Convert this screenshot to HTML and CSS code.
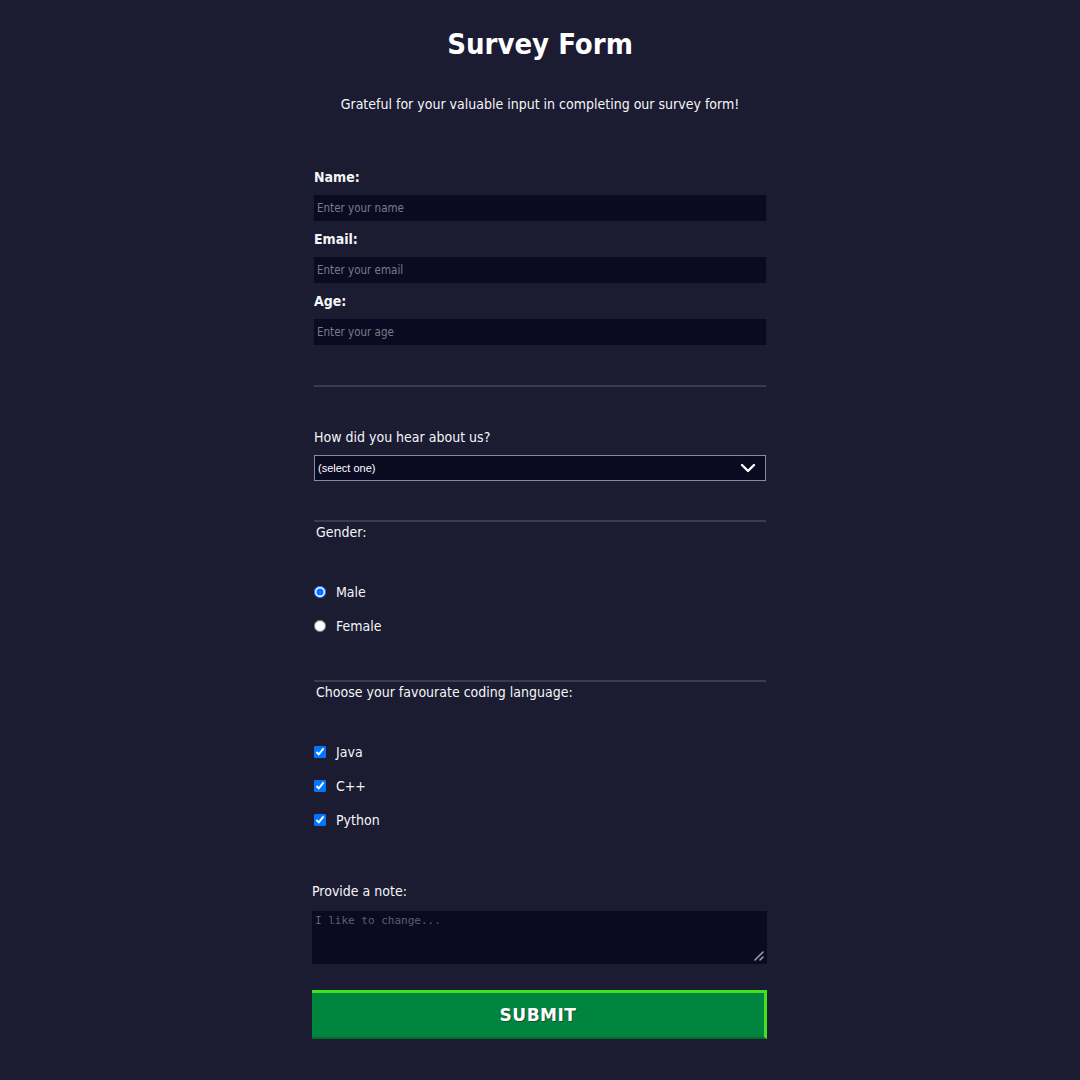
FILE: index.html
```html
<!DOCTYPE html>
<html lang="en">
<head>
<meta charset="utf-8">
<title>Survey Form</title>
<link rel="stylesheet" href="styles.css">
</head>
<body>
<h1 class="title">Survey Form</h1>
<p class="subtitle">Grateful for your valuable input in completing our survey form!</p>
<form class="survey">
  <label class="field-label" for="name">Name:</label>
  <input class="text-input" id="name" type="text" placeholder="Enter your name">
  <label class="field-label" for="email">Email:</label>
  <input class="text-input" id="email" type="email" placeholder="Enter your email">
  <label class="field-label" for="age">Age:</label>
  <input class="text-input" id="age" type="number" placeholder="Enter your age">

  <div class="rule rule-first"></div>

  <label class="plain-label hear" for="hear">How did you hear about us?</label>
  <div class="select-wrap">
    <select id="hear" class="select">
      <option>(select one)</option>
    </select>
    <svg class="chevron" width="16" height="10" viewBox="0 0 16 10"><path d="M2 2 L8 8 L14 2" fill="none" stroke="#ffffff" stroke-width="2.4" stroke-linecap="round" stroke-linejoin="round"/></svg>
  </div>

  <div class="rule rule-second"></div>
  <p class="group-label">Gender:</p>
  <div class="options options-radio">
    <label class="option"><input type="radio" name="gender" checked><span>Male</span></label>
    <label class="option"><input type="radio" name="gender"><span>Female</span></label>
  </div>

  <div class="rule rule-third"></div>
  <p class="group-label">Choose your favourate coding language:</p>
  <div class="options options-check">
    <label class="option"><input type="checkbox" checked><span>Java</span></label>
    <label class="option"><input type="checkbox" checked><span>C++</span></label>
    <label class="option"><input type="checkbox" checked><span>Python</span></label>
  </div>

  <label class="plain-label note-label" for="note">Provide a note:</label>
  <div class="note-wrap">
    <textarea id="note" class="note" placeholder="I like to change..."></textarea>
    <svg class="grip" width="12" height="12" viewBox="0 0 12 12"><path d="M2 10 L10 2 M7 10 L10 7" fill="none" stroke="#a0a0a8" stroke-width="1.6" stroke-linecap="round"/></svg>
  </div>

  <button type="submit" class="submit">SUBMIT</button>
</form>
</body>
</html>
```
FILE: styles.css
```css
html, body {
  margin: 0;
  padding: 0;
}
body {
  background: #1b1b32;
  color: #f5f6f7;
  font-family: "DejaVu Sans Condensed", "DejaVu Sans", sans-serif;
  width: 1080px;
  height: 1080px;
  overflow: hidden;
}
.title {
  margin: 0;
  padding-top: 26px;
  text-align: center;
  font-size: 29px;
  line-height: 36px;
  font-weight: bold;
  color: #ffffff;
}
.subtitle {
  margin: 0;
  margin-top: 33px;
  text-align: center;
  font-size: 14px;
  line-height: 18px;
}
.survey {
  width: 455px;
  margin: 0 0 0 312px;
  padding-top: 54px;
  display: flex;
  flex-direction: column;
}
.field-label {
  display: block;
  margin-left: 2px;
  font-size: 14px;
  line-height: 20px;
  font-weight: bold;
  margin-bottom: 8px;
}
.text-input {
  box-sizing: border-box;
  width: 452px;
  height: 26px;
  margin: 0 0 8px 2px;
  border: none;
  padding: 0 3px;
  background: #0a0a23;
  color: #ffffff;
  font-family: "DejaVu Sans Condensed", sans-serif;
  font-size: 11.5px;
  outline: none;
}
.text-input::placeholder {
  color: #7a7a88;
}
.rule {
  height: 2px;
  width: 452px;
  margin-left: 2px;
  background: #3b3b4f;
}
.rule-first {
  margin-top: 32px;
}
.plain-label {
  display: block;
  font-size: 14px;
  line-height: 20px;
}
.hear {
  margin-top: 40px;
  margin-left: 2px;
}
.select-wrap {
  position: relative;
  margin-top: 8px;
  margin-left: 2px;
  width: 452px;
  height: 26px;
}
.select {
  appearance: none;
  -webkit-appearance: none;
  box-sizing: border-box;
  width: 452px;
  height: 26px;
  background: #0a0a23;
  color: #ffffff;
  border: 1px solid #8a8a98;
  border-radius: 0;
  padding: 0 3px;
  font-family: "Liberation Sans", Arial, sans-serif;
  font-size: 11px;
}
.chevron {
  position: absolute;
  right: 10px;
  top: 8px;
  pointer-events: none;
}
.rule-second {
  margin-top: 39px;
}
.group-label {
  margin: 0 0 0 4px;
  font-size: 14px;
  line-height: 20px;
}
.options {
  display: flex;
  flex-direction: column;
  gap: 14px;
  margin-left: 2px;
}
.options-radio {
  margin-top: 40px;
}
.option {
  display: flex;
  align-items: center;
  height: 20px;
  font-size: 14px;
  line-height: 20px;
}
.option input {
  margin: 0 10px 0 0;
  width: 12px;
  height: 12px;
}
.rule-third {
  margin-top: 44px;
}
.options-check {
  margin-top: 40px;
}
.note-label {
  margin-top: 51px;
}
.note-wrap {
  position: relative;
  margin-top: 10px;
  width: 455px;
  height: 53px;
}
.note {
  display: block;
  box-sizing: border-box;
  width: 455px;
  height: 53px;
  margin: 0;
  background: #0a0a23;
  color: #ffffff;
  border: none;
  padding: 3px 3px;
  font-family: "DejaVu Sans Mono", monospace;
  font-size: 11px;
  outline: none;
  resize: none;
}
.note::placeholder {
  color: #5f5f6f;
}
.grip {
  position: absolute;
  right: 2px;
  bottom: 2px;
  pointer-events: none;
}
.submit {
  box-sizing: border-box;
  width: 455px;
  height: 49px;
  margin-top: 26px;
  background: #00853f;
  color: #ffffff;
  border-style: solid;
  border-width: 3px 3px 2px 0;
  border-color: #3fe31f #3fe31f #0b6a2b #3fe31f;
  font-family: "DejaVu Sans", sans-serif;
  font-weight: bold;
  font-size: 17px;
  letter-spacing: 0.5px;
  text-shadow: 1px 1px 0 #1c4a2a;
  cursor: pointer;
}
```
